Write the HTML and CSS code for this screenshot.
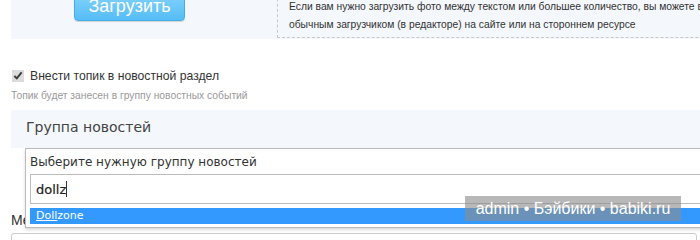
FILE: index.html
```html
<!DOCTYPE html>
<html lang="ru">
<head>
  <meta charset="UTF-8" />
  <title>Добавить топик</title>
  <link rel="stylesheet" href="styles.css">
</head>
<body>
  <div class="upload">
    <button class="upload-btn">Загрузить</button>
    <div class="upload-note">
      Если вам нужно загрузить фото между текстом или большее количество, вы можете воспользоваться<br>
      обычным загрузчиком (в редакторе) на сайте или на стороннем ресурсе
    </div>
  </div>

  <label class="check">
    <input type="checkbox" checked />
    Внести топик в новостной раздел
  </label>
  <div class="hint">Топик будет занесен в группу новостных событий</div>

  <div class="group">
    <div class="group-title">Группа новостей</div>
    <div class="select-drop">
      <div class="select-label">Выберите нужную группу новостей</div>
      <div class="select-search">dollz<span class="caret"></span></div>
      <ul class="select-results">
        <li class="active"><u>Doll</u>zone</li>
      </ul>
    </div>
  </div>

  <div class="field">
    <div class="field-label">Метки</div>
    <input type="text" class="field-input" />
  </div>

  <div class="watermark">admin • Бэйбики • babiki.ru</div>
</body>
</html>
```

FILE: styles.css
```css
body {
  margin: 0;
  font-family: 'Liberation Sans', Arial, sans-serif;
  color: #333;
  background: #fff;
  overflow: hidden;
}

.upload {
  margin: -12px 0 0 11px;
  height: 51px;
  background: #f4f7fb;
  display: flex;
  align-items: flex-start;
  overflow: hidden;
}

.upload-btn {
  flex-shrink: 0;
  margin-left: 63px;
  width: 111px;
  height: 33px;
  border: 1px solid #45aee8;
  border-radius: 4px;
  background: linear-gradient(#8ad6fc, #55bdf6);
  color: #fff;
  font-family: 'Liberation Sans', Arial, sans-serif;
  font-size: 18px;
  padding: 3px 0 0;
  box-shadow: 0 1px 1px rgba(0, 0, 0, 0.15);
}

.upload-note {
  flex-shrink: 0;
  margin-left: 92px;
  height: 50px;
  padding: 10px 0 0 11px;
  box-sizing: border-box;
  border-left: 1px dashed #c8c8c8;
  border-bottom: 1px dashed #c8c8c8;
  font-size: 10.3px;
  line-height: 18px;
  white-space: nowrap;
}

.check {
  display: flex;
  align-items: center;
  gap: 6px;
  margin: 29px 0 0 12px;
  font-size: 12.2px;
  height: 16px;
}

.check input {
  margin: 0;
  width: 12px;
  height: 12px;
  accent-color: #dcdcdc;
}

.hint {
  margin: 6px 0 0 11px;
  font-size: 10.3px;
  color: #999;
}

.group {
  position: relative;
  margin: 9px 0 0 11px;
  height: 38px;
  background: #f4f7fb;
}

.group-title {
  padding: 9px 0 0 15px;
  font-family: 'DejaVu Sans', Verdana, sans-serif;
  font-size: 14px;
  color: #444;
}

.select-drop {
  position: absolute;
  top: 38px;
  left: 14px;
  width: 720px;
  height: 80px;
  box-sizing: border-box;
  background: #fff;
  border: 1px solid #bbb;
  box-shadow: 0 2px 3px rgba(0, 0, 0, 0.15);
  font-family: 'DejaVu Sans', Verdana, sans-serif;
  z-index: 2;
}

.select-label {
  padding: 6px 0 0 4px;
  font-size: 12px;
  height: 17px;
  color: #333;
}

.select-search {
  margin: 2px 0 0 4px;
  height: 30px;
  box-sizing: border-box;
  border: 1px solid #bbb;
  padding: 6px 0 0 5px;
  font-size: 13px;
  color: #222;
  -webkit-text-stroke: 0.2px #222;
}

.caret {
  display: inline-block;
  width: 1px;
  height: 16px;
  background: #333;
  vertical-align: -3px;
}

.select-results {
  list-style: none;
  margin: 4px 0 0 4px;
  padding: 0;
}

.select-results li {
  height: 16px;
  line-height: 16px;
  padding-left: 6px;
  font-size: 11px;
}

.select-results .active {
  background: #3399ff;
  color: #fff;
}

.field {
  margin: 64px 0 0 11px;
}

.field-label {
  font-size: 14px;
  color: #333;
}

.field-input {
  margin-top: 5px;
  width: 680px;
  height: 26px;
  border: 1px solid #ccc;
  border-radius: 3px;
}

.watermark {
  position: absolute;
  left: 465px;
  top: 196px;
  width: 216px;
  height: 25px;
  background: rgba(140, 140, 140, 0.62);
  color: #fff;
  font-size: 16px;
  line-height: 25px;
  text-align: center;
  z-index: 5;
}
```
